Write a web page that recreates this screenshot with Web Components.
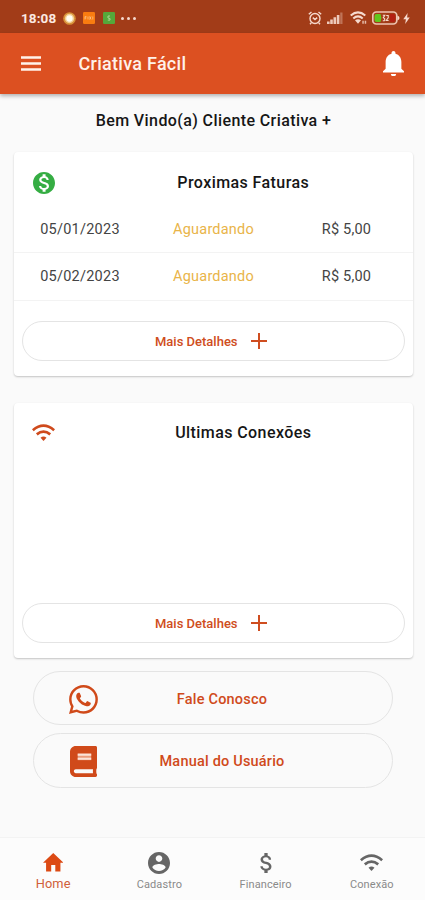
<!DOCTYPE html>
<html lang="pt-BR">
<head>
<meta charset="utf-8">
<meta name="viewport" content="width=device-width, initial-scale=1">
<title>Criativa Fácil</title>
<style>
  html, body {
    margin: 0;
    height: 100%;
  }
  body {
    font-family: Roboto, "Liberation Sans", sans-serif;
    background: #fafafa;
    color: #161616;
    overflow: hidden;
  }
</style>
</head>
<body>
<criativa-app></criativa-app>

<script>
const ICONS = {
  menu: ['0 0 20 15', '<path d="M0 .2h20v2.6H0zM0 6.2h20v2.6H0zM0 12.2h20v2.6H0z"/>'],
  bell: ['4 2.5 16 19.5', '<path d="M12 22c1.1 0 2-.9 2-2h-4c0 1.1.89 2 2 2zm6-6v-5c0-3.07-1.64-5.64-4.5-6.32V4c0-.83-.67-1.5-1.5-1.5s-1.5.67-1.5 1.5v.68C7.63 5.36 6 7.92 6 11v5l-2 2v1h16v-1l-2-2z"/>'],
  coin: ['2 2 20 20', '<path d="M12 2C6.48 2 2 6.48 2 12s4.48 10 10 10 10-4.48 10-10S17.52 2 12 2zm1.41 16.09V20h-2.67v-1.93c-1.71-.36-3.16-1.46-3.27-3.4h1.96c.1 1.05.82 1.87 2.65 1.87 1.96 0 2.4-.98 2.4-1.59 0-.83-.44-1.61-2.67-2.14-2.48-.6-4.18-1.62-4.18-3.67 0-1.72 1.39-2.84 3.11-3.21V4h2.67v1.95c1.86.45 2.79 1.86 2.85 3.39H14.3c-.05-1.11-.64-1.87-2.22-1.87-1.5 0-2.4.68-2.4 1.64 0 .84.65 1.39 2.67 1.91s4.18 1.39 4.18 3.91c-.01 1.83-1.38 2.83-3.12 3.16z"/>'],
  wifi: ['0 0 24 18', '<g fill="none" stroke="currentColor" stroke-width="2.8"><path d="M.9 6.5Q12-2.9 23.1 6.5"/><path d="M5 11Q12 5.2 19 11"/></g><path d="M8.9 14.6Q12 12 15.1 14.6L12 18z"/>'],
  plus: ['0 0 16 16', '<path d="M7 0h2v7h7v2H9v7H7V9H0V7h7z"/>'],
  whatsapp: ['0 0 16 16', '<path d="M13.601 2.326A7.85 7.85 0 0 0 7.994 0C3.627 0 .068 3.558.064 7.926c0 1.399.366 2.76 1.057 3.965L0 16l4.204-1.102a7.9 7.9 0 0 0 3.79.965h.004c4.368 0 7.926-3.558 7.93-7.93A7.9 7.9 0 0 0 13.6 2.326zM7.994 14.521a6.6 6.6 0 0 1-3.356-.92l-.24-.144-2.494.654.666-2.433-.156-.251a6.56 6.56 0 0 1-1.007-3.505c0-3.626 2.957-6.584 6.591-6.584a6.56 6.56 0 0 1 4.66 1.931 6.56 6.56 0 0 1 1.928 4.66c-.004 3.639-2.961 6.592-6.592 6.592m3.615-4.934c-.197-.099-1.17-.578-1.353-.646-.182-.065-.315-.099-.445.099-.133.197-.513.646-.627.775-.114.133-.232.148-.43.05-.197-.1-.836-.308-1.592-.985-.59-.525-.985-1.175-1.103-1.372-.114-.198-.011-.304.088-.403.087-.088.197-.232.296-.346.1-.114.133-.198.198-.33.065-.134.034-.248-.015-.347-.05-.099-.445-1.076-.612-1.47-.16-.389-.323-.335-.445-.34-.114-.007-.247-.007-.38-.007a.73.73 0 0 0-.529.247c-.182.198-.691.677-.691 1.654s.71 1.916.81 2.049c.098.133 1.394 2.132 3.383 2.992.47.205.84.326 1.129.418.475.152.904.129 1.246.08.38-.058 1.171-.48 1.338-.943.164-.464.164-.86.114-.943-.049-.084-.182-.133-.38-.232"/>'],
  book: ['0 0 448 512', '<path d="M448 360V24c0-13.3-10.7-24-24-24H96C43 0 0 43 0 96v320c0 53 43 96 96 96h328c13.3 0 24-10.7 24-24v-16c0-7.5-3.5-14.3-8.9-18.7-4.2-15.4-4.2-59.3 0-74.7 5.4-4.3 8.9-11.1 8.9-18.6zM381.4 448H96c-17.7 0-32-14.3-32-32 0-17.6 14.4-32 32-32h285.4c-1.9 17.1-1.9 46.9 0 64z"/><path d="M128 122h224v112H128z" fill="#eb9c7c"/><path d="M128 130h224v32H128zM128 194h224v32H128z" fill="#fbe3d8"/>'],
  home: ['2 3 20 17', '<path d="M10 20v-6h4v6h5v-8h3L12 3 2 12h3v8z"/>'],
  account: ['2 2 20 20', '<path d="M12 2C6.48 2 2 6.48 2 12s4.48 10 10 10 10-4.48 10-10S17.52 2 12 2zm0 3c1.66 0 3 1.34 3 3s-1.34 3-3 3-3-1.34-3-3 1.34-3 3-3zm0 14.2c-2.5 0-4.71-1.28-6-3.22.03-1.99 4-3.08 6-3.08 1.99 0 5.97 1.09 6 3.08-1.29 1.94-3.5 3.22-6 3.22z"/>'],
  money: ['6 3 11 18', '<path d="M11.8 10.9c-2.27-.59-3-1.2-3-2.15 0-1.09 1.01-1.85 2.7-1.85 1.78 0 2.44.85 2.5 2.1h2.21c-.07-1.72-1.12-3.3-3.21-3.81V3h-3v2.16c-1.94.42-3.5 1.68-3.5 3.61 0 2.31 1.91 3.46 4.7 4.13 2.5.6 3 1.48 3 2.41 0 .69-.49 1.79-2.7 1.79-2.06 0-2.87-.92-2.98-2.1h-2.2c.12 2.19 1.76 3.42 3.68 3.83V21h3v-2.15c1.95-.37 3.5-1.5 3.5-3.55 0-2.84-2.43-3.81-4.7-4.4z"/>'],
  sun: ['0 0 14 14', '<circle cx="7" cy="7" r="6.8" fill="#d79138"/><circle cx="7" cy="7" r="5" fill="#f3cf94"/><circle cx="7" cy="7" r="3.4" fill="#fffdf2"/>'],
  orangeApp: ['0 0 12 12', '<rect width="12" height="12" rx="1.2" fill="#fa7c10"/><path d="M2 4.5v3M2 4.7h1.5M2 6h1.3M5 4.5v3M6.5 4.5l1.5 3M8 4.5l-1.5 3M9.8 4.5v3" stroke="#fbc38b" stroke-width=".8"/>'],
  greenApp: ['0 0 12 12', '<rect width="12" height="12" rx="1.2" fill="#55a83a"/><path d="M7 4H5v2l2 .5v1.6H4.8" fill="none" stroke="#a9d692"/>'],
  alarm: ['0 0 14 14', '<g fill="none" stroke="currentColor" stroke-width="1.4"><circle cx="7" cy="7.5" r="5"/><path d="M.8 3.3 3.5 1M13.2 3.3 10.5 1M3.4 11.6 2 13.2M10.6 11.6l1.4 1.6M4.8 6.6 7 8.5l2.2-1.9"/></g>'],
  signal: ['0 0 16 12', '<path d="M0 9.5h2.6V12H0zM3.2 7.5h2.6V12H3.2zM6.5 5.3h2.6V12H6.5zM9.8 3h2.6v9H9.8z" opacity=".9"/><path d="M13.2.5h2.3V12h-2.3z" opacity=".35"/>'],
  statusWifi: ['0 0 17 14', '<g fill="none" stroke="currentColor" stroke-width="2"><path d="M.7 4.5Q8-1.7 15.3 4.5"/><path d="M3.3 7.5Q8 3.3 12.7 7.5"/></g><path d="M5 9.3Q8 7 11 9.3L8 12.8z"/><path d="M12.3 9.8h1.5v3h-1.5zM14.7 9.8h1.5v3h-1.5z" opacity=".8"/>'],
  battery: ['0 0 28 14', '<rect x=".8" y="1" width="24" height="12" rx="3.5" fill="none" stroke="#eec4b2" stroke-width="1.7"/><path d="M25.5 4.8q2 .3 2 2.2t-2 2.2z"/><path d="M4.5 3h4Q10.300 7 8.500 11h-4a2 2 0 0 1-2-2V5a2 2 0 0 1 2-2z" fill="#62c81c"/><path d="M18 3h3.300a2 2 0 0 1 2 2v4a2 2 0 0 1-2 2H18z" fill="#b31f12"/><path d="M10.800 4.300h2L11.300 6.600l1.500 1.300-.5 1.800h-1.500M14.200 4.500h2v2.200l-2 2.800h2.400" fill="none" stroke="currentColor" stroke-width="1.100"/>'],
  bolt: ['0 0 8 12', '<path d="M5.3 0 .3 6.7h3L2.5 12l5.2-7h-3z"/>']
};

class AppIcon extends HTMLElement {
  connectedCallback() {
    const [viewBox, shapes] = ICONS[this.getAttribute('name')];
    this.attachShadow({ mode: 'open' }).innerHTML = `
      <style>
        :host {
          display: block;
          flex: none;
          width: ${this.getAttribute('w')}px;
          height: ${this.getAttribute('h')}px;
        }
        svg {
          display: block;
          width: 100%;
          height: 100%;
          fill: currentColor;
        }
      </style>
      <svg viewBox="${viewBox}" preserveAspectRatio="none" aria-hidden="true">${shapes}</svg>
    `;
  }
}

class StatusBar extends HTMLElement {
  constructor() {
    super();
    this.attachShadow({ mode: 'open' }).innerHTML = `
      <style>
        :host {
          display: flex;
          box-sizing: border-box;
          height: 33px;
          padding: 3px 15px 0 21px;
          align-items: center;
          justify-content: space-between;
          background: #a23c18;
          color: #f6d9cd;
        }
        .group {
          display: flex;
          align-items: center;
        }
        .time {
          width: 42px;
          font-size: 13.5px;
          font-weight: 700;
          letter-spacing: 0.1px;
          color: #fbe9e1;
        }
        .apps {
          gap: 7px;
        }
        .dots {
          display: flex;
          gap: 3px;
          margin-left: 5.5px;
        }
        .dots i {
          width: 3px;
          height: 3px;
          border-radius: 50%;
          background: #f6d9cd;
        }
      </style>
      <div class="group">
        <span class="time">18:08</span>
        <div class="group apps">
          <app-icon name="sun" w="13" h="13"></app-icon>
          <app-icon name="orangeApp" w="12" h="12"></app-icon>
          <app-icon name="greenApp" w="12" h="12" style="margin-left:1px"></app-icon>
        </div>
        <div class="dots"><i></i><i></i><i></i></div>
      </div>
      <div class="group">
        <app-icon name="alarm" w="14" h="14"></app-icon>
        <app-icon name="signal" w="16" h="12" style="margin-left:5px"></app-icon>
        <app-icon name="statusWifi" w="17" h="14" style="margin-left:7px"></app-icon>
        <app-icon name="battery" w="28" h="14" style="margin-left:5px"></app-icon>
        <app-icon name="bolt" w="7" h="11" style="margin-left:3px"></app-icon>
      </div>
    `;
  }
}

class AppBar extends HTMLElement {
  constructor() {
    super();
    this.attachShadow({ mode: 'open' }).innerHTML = `
      <style>
        :host {
          display: flex;
          box-sizing: border-box;
          height: 61px;
          padding: 0 21.5px 0 21px;
          align-items: center;
          background: #dc5021;
          color: #fff2ea;
          box-shadow: 0 2px 4px rgba(0, 0, 0, 0.3);
        }
        h1 {
          flex: 1;
          margin: 0 0 0 37.5px;
          font-size: 18px;
          font-weight: 500;
          letter-spacing: 0.28px;
        }
        .bell {
          color: #fff;
        }
      </style>
      <app-icon name="menu" w="20" h="15"></app-icon>
      <h1><slot></slot></h1>
      <app-icon class="bell" name="bell" w="21" h="25.5"></app-icon>
    `;
  }
}

class InfoCard extends HTMLElement {
  constructor() {
    super();
    this.attachShadow({ mode: 'open' }).innerHTML = `
      <style>
        :host {
          display: flex;
          flex-direction: column;
          box-sizing: border-box;
          background: #fff;
          border-radius: 4px;
          box-shadow: 0 1px 2px rgba(0, 0, 0, 0.22);
        }
        header {
          display: flex;
          height: 53px;
          padding-top: var(--header-offset, 8px);
          box-sizing: border-box;
          align-items: center;
        }
        .icon {
          display: flex;
          width: 59.5px;
          justify-content: center;
        }
        h2 {
          flex: 1;
          margin: 0;
          text-align: center;
          font-size: 16px;
          font-weight: 500;
          letter-spacing: 0.42px;
        }
        .body {
          flex: 1;
        }
        .footer {
          padding: 0 8px 15px;
        }
      </style>
      <header>
        <div class="icon"><slot name="icon"></slot></div>
        <h2><slot name="title"></slot></h2>
      </header>
      <div class="body"><slot></slot></div>
      <div class="footer"><more-button></more-button></div>
    `;
  }
}

class InvoiceRow extends HTMLElement {
  constructor() {
    super();
    this.attachShadow({ mode: 'open' }).innerHTML = `
      <style>
        :host {
          display: grid;
          grid-template-columns: repeat(3, 1fr);
          box-sizing: border-box;
          height: 47.8px;
          padding-top: 1.5px;
          align-items: center;
          text-align: center;
          border-bottom: 1px solid #f3f3f3;
          font-size: 14.5px;
          color: #444;
        }
        .date {
          padding-right: 1px;
          letter-spacing: 0.25px;
        }
        .status {
          color: #e9b448;
          letter-spacing: 0.2px;
        }
        .value { letter-spacing: 0.2px; }
      </style>
      <span class="date"><slot name="date"></slot></span>
      <span class="status"><slot name="status"></slot></span>
      <span class="value"><slot name="value"></slot></span>
    `;
  }
}

class MoreButton extends HTMLElement {
  constructor() {
    super();
    this.attachShadow({ mode: 'open' }).innerHTML = `
      <style>
        :host { display: block; }
        button {
          display: flex;
          box-sizing: border-box;
          width: 100%;
          height: 40px;
          padding: 0 5px 0 0;
          gap: 13.5px;
          align-items: center;
          justify-content: center;
          border: 1px solid #e4e4e4;
          border-radius: 20px;
          background: #fff;
          color: #cf4d20;
          font: 500 13px Roboto, sans-serif;
        }
      </style>
      <button><span>Mais Detalhes</span><app-icon name="plus" w="16" h="16"></app-icon></button>
    `;
  }
}

class ActionButton extends HTMLElement {
  constructor() {
    super();
    this.attachShadow({ mode: 'open' }).innerHTML = `
      <style>
        :host { display: block; }
        button {
          display: flex;
          box-sizing: border-box;
          width: 100%;
          height: 54.5px;
          padding: 3px 80px 0 0;
          align-items: center;
          border: 1px solid #e4e4e4;
          border-radius: 28px;
          background: #fafafa;
          color: #d04a1a;
          font: 500 14.5px Roboto, sans-serif;
        }
        .icon {
          display: flex;
          width: 98px;
          justify-content: center;
        }
        .label {
          flex: 1;
          white-space: nowrap;
          text-align: center;
          letter-spacing: 0.2px;
        }
      </style>
      <button>
        <span class="icon"><slot name="icon"></slot></span>
        <span class="label"><slot></slot></span>
      </button>
    `;
  }
}

class NavItem extends HTMLElement {
  constructor() {
    super();
    this.attachShadow({ mode: 'open' }).innerHTML = `
      <style>
        :host {
          display: flex;
          flex: 1;
          flex-direction: column;
          align-items: center;
          font-size: 11px;
          letter-spacing: 0.1px;
          color: #8a8a8a;
        }
        :host([active]) {
          font-size: 12.8px;
          color: #d0603a;
        }
        .icon {
          display: flex;
          height: 23px;
          align-items: center;
          color: #666;
        }
        :host([active]) .icon { color: #dc4a14; }
        .label {
          line-height: 21px;
        }
        :host([active]) .label {
          line-height: 19px;
        }
      </style>
      <div class="icon"><slot name="icon"></slot></div>
      <div class="label"><slot></slot></div>
    `;
  }
}

class BottomNav extends HTMLElement {
  constructor() {
    super();
    this.attachShadow({ mode: 'open' }).innerHTML = `
      <style>
        :host {
          display: flex;
          box-sizing: border-box;
          height: 63px;
          padding-top: 13px;
          background: #fcfcfc;
          border-top: 1px solid #f3f3f3;
        }
      </style>
      <slot></slot>
    `;
  }
}

class CriativaApp extends HTMLElement {
  constructor() {
    super();
    this.attachShadow({ mode: 'open' }).innerHTML = `
      <style>
        :host {
          display: flex;
          flex-direction: column;
          height: 100vh;
        }
        main {
          display: flex;
          flex: 1;
          flex-direction: column;
          padding: 0 12px 0 14px;
        }
        .welcome {
          margin: 0;
          height: 58px;
          line-height: 54px;
          text-align: center;
          font-size: 16px;
          font-weight: 500;
          letter-spacing: 0.4px;
        }
        .invoices { height: 224px; }
        .connections {
          --header-offset: 6px;
          height: 255px;
          margin-top: 27px;
        }
        .coin { color: #35ad43; }
        .wifi { color: #cf4a1c; }
        .actions {
          display: flex;
          flex-direction: column;
          gap: 8px;
          padding: 12.5px 20px 0 19px;
        }
      </style>
      <status-bar></status-bar>
      <app-bar>Criativa Fácil</app-bar>
      <main>
        <p class="welcome">Bem Vindo(a) Cliente Criativa +</p>
        <info-card class="invoices">
          <app-icon slot="icon" class="coin" name="coin" w="22" h="22"></app-icon>
          <span slot="title">Proximas Faturas</span>
          <invoice-row>
            <span slot="date">05/01/2023</span>
            <span slot="status">Aguardando</span>
            <span slot="value">R$ 5,00</span>
          </invoice-row>
          <invoice-row>
            <span slot="date">05/02/2023</span>
            <span slot="status">Aguardando</span>
            <span slot="value">R$ 5,00</span>
          </invoice-row>
        </info-card>
        <info-card class="connections">
          <app-icon slot="icon" class="wifi" name="wifi" w="23" h="17"></app-icon>
          <span slot="title">Ultimas Conexões</span>
        </info-card>
        <div class="actions">
          <action-button>
            <app-icon slot="icon" name="whatsapp" w="29" h="29"></app-icon>Fale Conosco
          </action-button>
          <action-button>
            <app-icon slot="icon" name="book" w="27" h="31"></app-icon>Manual do Usuário
          </action-button>
        </div>
      </main>
      <bottom-nav>
        <nav-item active><app-icon slot="icon" name="home" w="20.5" h="18.5"></app-icon>Home</nav-item>
        <nav-item><app-icon slot="icon" name="account" w="22" h="22"></app-icon>Cadastro</nav-item>
        <nav-item><app-icon slot="icon" name="money" w="12" h="20"></app-icon>Financeiro</nav-item>
        <nav-item><app-icon slot="icon" name="wifi" w="23" h="17"></app-icon>Conexão</nav-item>
      </bottom-nav>
    `;
  }
}

customElements.define('app-icon', AppIcon);
customElements.define('status-bar', StatusBar);
customElements.define('app-bar', AppBar);
customElements.define('more-button', MoreButton);
customElements.define('info-card', InfoCard);
customElements.define('invoice-row', InvoiceRow);
customElements.define('action-button', ActionButton);
customElements.define('nav-item', NavItem);
customElements.define('bottom-nav', BottomNav);
customElements.define('criativa-app', CriativaApp);
</script>
</body>
</html>
